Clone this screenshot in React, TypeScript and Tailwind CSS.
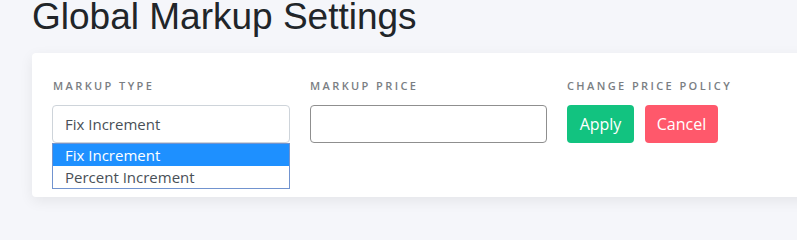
import React from "react";

export default function App() {
  return (
    <div className="w-[797px] h-[216px] min-h-screen overflow-hidden bg-[#f5f6fa]">
      <h1 className="pl-8 text-[37px] leading-[33px] text-[#212529] font-['Liberation_Sans',Arial,sans-serif]">
        Global Markup Settings
      </h1>
      <div className="mt-[20px] ml-8 w-[790px] bg-white rounded-[4px] shadow-[0_4px_14px_rgba(0,0,0,0.07)] pt-[25px] pb-[54px] pl-5 font-['Open_Sans',sans-serif]">
        <div className="flex gap-5">
          <div className="w-[238px] flex flex-col">
            <label className="text-[11px] leading-4 font-semibold tracking-[2.4px] text-[#7a7e83] uppercase pl-px">
              Markup Type
            </label>
            <div className="relative mt-[11px]">
              <div className="h-[38px] border border-[#ced4da] rounded-[4px] flex items-center pl-3 text-[15px] text-[#495057]">
                Fix Increment
              </div>
              <div className="absolute left-0 top-[38px] w-full border border-[#7193cf] bg-white text-[15px] leading-[22px] z-10">
                <div className="bg-[#1e90ff] text-white pl-3 h-[22px]">Fix Increment</div>
                <div className="text-[#495057] pl-3 h-[22px]">Percent Increment</div>
              </div>
            </div>
          </div>
          <div className="w-[237px] flex flex-col">
            <label className="text-[11px] leading-4 font-semibold tracking-[2.4px] text-[#7a7e83] uppercase">
              Markup Price
            </label>
            <input
              type="text"
              className="mt-[11px] h-[38px] border border-[#8f8f8f] rounded-[4px] outline-none px-3"
            />
          </div>
          <div className="flex flex-col">
            <label className="text-[11px] leading-4 font-semibold tracking-[2.4px] text-[#7a7e83] uppercase">
              Change Price Policy
            </label>
            <div className="mt-[11px] flex gap-[11px]">
              <button className="h-[38px] w-[67px] rounded-[4px] bg-[#12c380] text-white text-[16px]">
                Apply
              </button>
              <button className="h-[38px] w-[73px] rounded-[4px] bg-[#ff586b] text-white text-[16px]">
                Cancel
              </button>
            </div>
          </div>
        </div>
      </div>
    </div>
  );
}
